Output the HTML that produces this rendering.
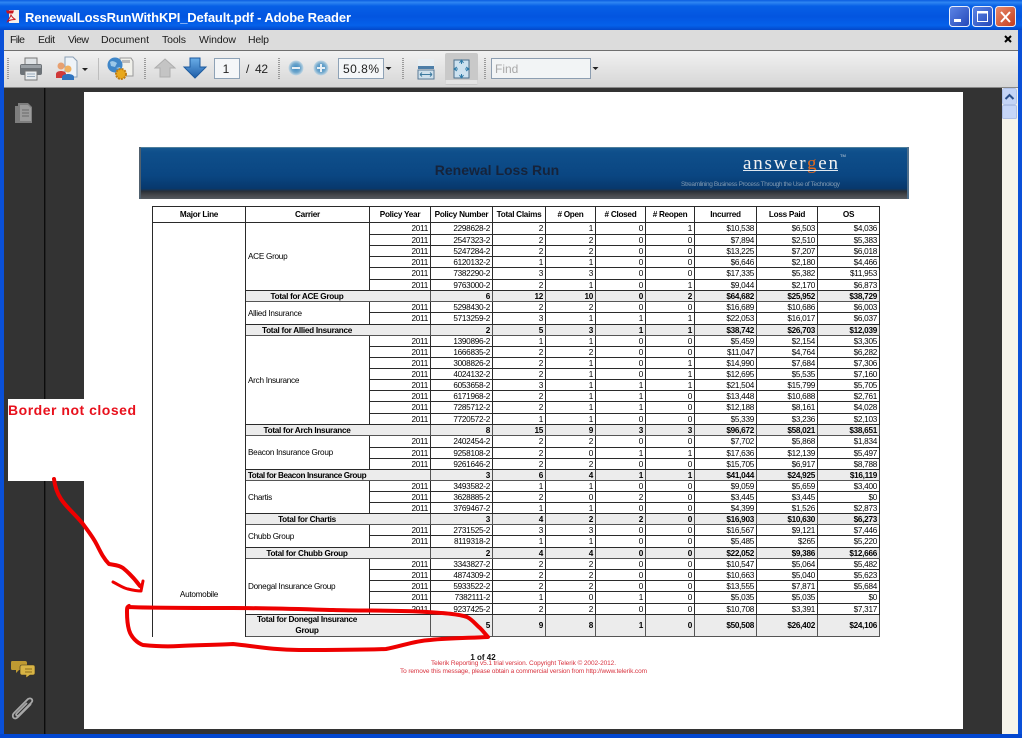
<!DOCTYPE html>
<html lang="en">
<head>
<meta charset="utf-8">
<title>RenewalLossRunWithKPI_Default.pdf - Adobe Reader</title>
<style>
html,body{margin:0;padding:0;background:#333;}
body{position:relative;width:1022px;height:738px;overflow:hidden;font-family:"Liberation Sans",sans-serif;}
#chrome{position:absolute;left:0;top:0;}
#rep{position:absolute;left:152px;top:206px;width:727px;table-layout:fixed;border-collapse:collapse;font:8.2px/9px "Liberation Sans",sans-serif;letter-spacing:-.28px;color:#000;background:#fff;}
#rep td,#rep th{border:1px solid #2a2a2a;padding:0 2px 0 2px;text-align:right;overflow:hidden;white-space:nowrap;}
#rep tr{height:11px;}
#rep tr.a{height:12px;}
#rep tr.h{height:16px;}
#rep tr.d{height:21px;}
#rep th{text-align:center;font-weight:bold;padding:0;}
#rep td.c{text-align:left;white-space:normal;}
#rep td.m{text-align:center;vertical-align:bottom;padding-bottom:38px;border-bottom:0;}
#rep tr.t td{background:#ececec;font-weight:bold;border-color:#555;}
#rep tr.t td.l{text-align:center;padding:0 62px 0 0;white-space:nowrap;}
#rep tr.d td.l{line-height:10.5px;}
#over{position:absolute;left:0;top:0;pointer-events:none;}
</style>
</head>
<body>
<svg id="chrome" width="1022" height="738" viewBox="0 0 1022 738" xmlns="http://www.w3.org/2000/svg">
<defs>
<linearGradient id="tb" x1="0" y1="0" x2="0" y2="1"><stop offset="0" stop-color="#0a5ce0"/><stop offset=".08" stop-color="#2f86f2"/><stop offset=".2" stop-color="#0760e6"/><stop offset=".55" stop-color="#0355e0"/><stop offset=".85" stop-color="#0561ea"/><stop offset="1" stop-color="#0347c8"/></linearGradient>
<linearGradient id="tool" x1="0" y1="0" x2="0" y2="1"><stop offset="0" stop-color="#f1f1f1"/><stop offset="1" stop-color="#d6d6d6"/></linearGradient>
<linearGradient id="ban" x1="0" y1="0" x2="0" y2="1"><stop offset="0" stop-color="#175a92"/><stop offset=".1" stop-color="#0f4f8b"/><stop offset=".55" stop-color="#0a4682"/><stop offset=".8" stop-color="#07386c"/><stop offset=".85" stop-color="#2a3038"/><stop offset=".92" stop-color="#44464a"/><stop offset="1" stop-color="#555a60"/></linearGradient>
<linearGradient id="btn" x1="0" y1="0" x2="1" y2="1"><stop offset="0" stop-color="#5d86e6"/><stop offset="1" stop-color="#2447b8"/></linearGradient>
<linearGradient id="cls" x1="0" y1="0" x2="1" y2="1"><stop offset="0" stop-color="#e98d6e"/><stop offset="1" stop-color="#c33a1a"/></linearGradient>
<linearGradient id="ab" x1="0" y1="0" x2="0" y2="1"><stop offset="0" stop-color="#6aaee8"/><stop offset="1" stop-color="#1f5ea8"/></linearGradient>
<radialGradient id="zb"><stop offset="0" stop-color="#3d8ac0"/><stop offset=".6" stop-color="#6ea6cc"/><stop offset="1" stop-color="#c4d8e4"/></radialGradient>
</defs>

<!-- base -->
<rect width="1022" height="738" fill="#0347d0"/>
<rect x="0" y="0" width="1022" height="30" fill="url(#tb)"/>
<rect x="0" y="30" width="4" height="708" fill="#0a50d8"/>
<rect x="1018" y="30" width="4" height="708" fill="#0a50d8"/>
<rect x="4" y="30" width="1014" height="20" fill="#dcdcdc"/>
<rect x="4" y="50" width="1014" height="1" fill="#6f6f6f"/>
<rect x="4" y="51" width="1014" height="36" fill="url(#tool)"/>
<rect x="4" y="87" width="1014" height="1" fill="#888"/>
<rect x="4" y="88" width="1014" height="646" fill="#333"/>
<rect x="44" y="88" width="1.4" height="646" fill="#0c0c0c"/>
<rect x="84" y="92" width="879" height="637" fill="#fff"/>
<rect x="0" y="734" width="1022" height="4" fill="#0347d0"/>

<!-- title -->
<rect x="9" y="10" width="10" height="13" fill="#f6f0ea"/>
<path d="M6 10.5h8l-1 3H7z" fill="#c8141c"/>
<path d="M11 15c-1 3-3 5-3.5 6.5 2-1.500 5-2 8-2-2-1-3.500-2.500-4.500-4.500z" fill="none" stroke="#c8141c" stroke-width="1"/>
<text x="25" y="22" font-family="'Liberation Sans',sans-serif" font-weight="bold" font-size="13" fill="#fff" textLength="326" lengthAdjust="spacing">RenewalLossRunWithKPI_Default.pdf - Adobe Reader</text>

<!-- window buttons -->
<g stroke="#e8eefc" stroke-width="1">
<rect x="949.500" y="6.500" width="20" height="20" rx="3" fill="url(#btn)"/>
<rect x="972.500" y="6.500" width="20" height="20" rx="3" fill="url(#btn)"/>
<rect x="995.500" y="6.500" width="20" height="20" rx="3" fill="url(#cls)"/>
</g>
<rect x="954" y="19" width="7" height="3" fill="#fff"/>
<rect x="977.500" y="11.500" width="10" height="10" fill="none" stroke="#fff" stroke-width="1"/>
<rect x="977" y="11" width="11" height="2.500" fill="#fff"/>
<path d="M1001 12l9 10M1010 12l-9 10" stroke="#fff" stroke-width="2"/>

<!-- menu -->
<g font-family="'Liberation Sans',sans-serif" font-size="10.500" fill="#1a1a1a">
<text x="10" y="43" textLength="15">File</text>
<text x="38" y="43" textLength="17">Edit</text>
<text x="68" y="43" textLength="21">View</text>
<text x="101" y="43" textLength="48">Document</text>
<text x="162" y="43" textLength="24">Tools</text>
<text x="199" y="43" textLength="37">Window</text>
<text x="248" y="43" textLength="21">Help</text>
</g>
<path d="M1005 36l6 6M1011 36l-6 6" stroke="#000" stroke-width="2"/>

<!-- grips -->
<g stroke="#9a9a9a" stroke-width="2" stroke-dasharray="1 1">
<path d="M8 58v22M145 58v22M279 58v22M403 58v22M485 58v22"/>
</g>
<rect x="98" y="58" width="1" height="22" fill="#bdbdbd"/>

<!-- printer -->
<rect x="25" y="58" width="12" height="7" fill="#dfe3e6" stroke="#777"/>
<rect x="20" y="64" width="22" height="11" rx="2" fill="#6d7378"/>
<rect x="21" y="65" width="20" height="3" fill="#9aa0a5"/>
<rect x="25" y="71" width="12" height="9" fill="#e8ecef" stroke="#777"/>
<path d="M27 74h8M27 76.500h8" stroke="#9ab" stroke-width="1"/>

<!-- collaborate -->
<path d="M65 57h8l4 4v16H65z" fill="#eef3f8" stroke="#8a9fb5"/>
<circle cx="61" cy="66" r="3.500" fill="#e8a070"/>
<path d="M56 78v-4c0-4 10-4 10 0v4z" fill="#d03a3a"/>
<circle cx="68" cy="69" r="3.500" fill="#f0b060"/>
<path d="M62 80v-3c0-4 12-4 12 0v3z" fill="#2f74c0"/>
<path d="M82 68h6l-3 3z" fill="#222"/>

<!-- globe/gear -->
<path d="M120 58h11l2 3v15h-13z" fill="#f0f0ea" stroke="#999"/>
<rect x="122" y="60" width="8" height="3" fill="#bbb"/>
<circle cx="115" cy="65" r="7.500" fill="#3f86c8"/>
<path d="M110 62c3-2 5 0 7 1l-2 4-4-1zM116 68l4-1 1 3z" fill="#9cc8e8"/>
<circle cx="121" cy="74" r="5" fill="#e8a81c" stroke="#c07c10" stroke-width="2" stroke-dasharray="2 1"/>

<!-- arrows -->
<path d="M165 59l10 9h-5v9h-10v-9h-5z" fill="#c4c4c4" stroke="#aeaeae"/>
<path d="M190 58h10v9h6l-11 11-11-11h6z" fill="url(#ab)" stroke="#1d5a9e"/>

<!-- page num -->
<rect x="214.500" y="58.500" width="25" height="20" fill="#f4f6f8" stroke="#8ea2b6"/>
<g font-family="'Liberation Sans',sans-serif" font-size="12" fill="#222">
<text x="226" y="73" text-anchor="middle">1</text>
<text x="246" y="73">/</text>
<text x="255" y="73" textLength="13">42</text>
</g>

<!-- zoom -->
<circle cx="296" cy="68" r="7.500" fill="url(#zb)"/><rect x="292" y="67" width="8" height="2" fill="#e6eef4"/>
<circle cx="321" cy="68" r="7.500" fill="url(#zb)"/><path d="M317 68h8M321 64v8" stroke="#e6eef4" stroke-width="2"/>
<rect x="338.500" y="58.500" width="45" height="20" fill="#f4f6f8" stroke="#8ea2b6"/>
<text x="343" y="73" font-family="'Liberation Sans',sans-serif" font-size="12" fill="#222" textLength="36">50.8%</text>
<path d="M385.500 67h6l-3 3z" fill="#222"/>

<!-- fit width -->
<rect x="418" y="59" width="16" height="9" fill="#e8eef2"/>
<rect x="418" y="66" width="16" height="3" fill="#4d7ea8"/>
<rect x="418" y="70" width="16" height="9" fill="#cfe0ec" stroke="#5a7a96"/>
<path d="M420 74.500h12M420 74.500l2-2M420 74.500l2 2M432 74.500l-2-2M432 74.500l-2 2" stroke="#3d7aa0" fill="none"/>

<!-- fit page selected -->
<rect x="445" y="53" width="33" height="32" rx="2" fill="#c9c9c9"/>
<rect x="445.500" y="80" width="32" height="4" fill="#e4e4e4"/>
<rect x="454" y="60" width="15" height="18" fill="#cde2f0" stroke="#4b6f8c"/>
<path d="M461.500 60v4M461.500 74v4M454 69h4M465 69h4M459.500 63l2-3 2 3M459.500 75l2 3 2-3M457 67l-3 2 3 2M466 67l3 2-3 2" stroke="#2e7aa8" fill="none"/>

<!-- find -->
<rect x="491.500" y="58.500" width="99" height="20" fill="#f2f4f5" stroke="#8c9db0"/>
<text x="495" y="73" font-family="'Liberation Sans',sans-serif" font-size="12" fill="#a8a8a8">Find</text>
<path d="M592.500 67h6l-3 3z" fill="#222"/>

<!-- scrollbar -->
<rect x="1002" y="88" width="16" height="646" fill="#f6f4ea"/>
<rect x="1002.500" y="88.500" width="14" height="16" rx="2" fill="#c4d4f6" stroke="#b0c2e8"/>
<path d="M1005.500 99l4-4 4 4" fill="none" stroke="#2b4f8a" stroke-width="2"/>
<rect x="1002.500" y="105.500" width="14" height="13" rx="1" fill="#c6d6f8" stroke="#aebfe6"/>

<!-- side icons -->
<path d="M18 103h10l4 4v16H15v-17h3z" fill="#7e7e7e"/>
<path d="M20 105h8l3 3v13H20z" fill="#9c9c9c"/>
<path d="M22 110h7M22 113h7M22 116h7" stroke="#6a6a6a"/>
<path d="M12 661h13q2 0 2 2v5q0 2-2 2h-6l-3 3v-3h-4q-1 0-1-2v-5q0-2 1-2z" fill="#bf9a32"/>
<path d="M22 665h11q2 0 2 2v6q0 2-2 2h-3l-4 3v-3h-4q-2 0-2-2v-6q0-2 2-2z" fill="#d8b445" stroke="#3a3220" stroke-width=".6"/>
<path d="M25 669h7M25 672h7" stroke="#8a6d1c"/>
<path d="M31 704l-13 13c-4 4-7-1-4-4l14-14c3-2 6 1 3 4l-12 12c-2 2-4 0-2-2l10-10" fill="none" stroke="#a8a8a8" stroke-width="1.800"/>

<!-- report banner -->
<rect x="139" y="147" width="770" height="52" fill="url(#ban)"/>
<rect x="139" y="147" width="770" height="1" fill="#4f7f9c"/>
<rect x="139" y="147" width="2" height="52" fill="#50606e"/>
<rect x="907" y="147" width="2" height="52" fill="#50708c"/>
<text x="497" y="175" text-anchor="middle" font-family="'Liberation Sans',sans-serif" font-weight="bold" font-size="14" fill="#16233a">Renewal Loss Run</text>
<text x="743" y="169" font-family="'Liberation Serif',serif" font-size="19" fill="#f2f2f2" textLength="95" lengthAdjust="spacing">answer<tspan fill="#e06a20">g</tspan>en</text>
<rect x="743" y="170" width="95" height="1" fill="#dfe8f0"/>
<text x="840" y="157" font-family="'Liberation Sans',sans-serif" font-size="4" fill="#cfd8e0">TM</text>
<text x="681" y="186" font-family="'Liberation Sans',sans-serif" font-size="6.500" fill="#7f98b0" textLength="159">Streamlining Business Process Through the Use of Technology</text>

<!-- report footer -->
<text x="483" y="660" text-anchor="middle" font-family="'Liberation Sans',sans-serif" font-weight="bold" font-size="8" fill="#111">1 of 42</text>
<text x="431" y="665" font-family="'Liberation Sans',sans-serif" font-size="6.500" fill="#d8333f" textLength="185">Telerik Reporting v5.1 trial version. Copyright Telerik © 2002-2012.</text>
<text x="400" y="673" font-family="'Liberation Sans',sans-serif" font-size="6.500" fill="#d8333f" textLength="247">To remove this message, please obtain a commercial version from http://www.telerik.com</text>
</svg>

<table id="rep">
<colgroup><col style="width:93px"><col style="width:124px"><col style="width:61px"><col style="width:62px"><col style="width:53px"><col style="width:50px"><col style="width:50px"><col style="width:49px"><col style="width:62px"><col style="width:61px"><col style="width:62px"></colgroup>
<tr class="h"><th>Major Line</th><th>Carrier</th><th>Policy Year</th><th>Policy Number</th><th>Total Claims</th><th># Open</th><th># Closed</th><th># Reopen</th><th>Incurred</th><th>Loss Paid</th><th>OS</th></tr>
<tr class="a"><td class="m" rowspan="36">Automobile</td><td class="c" rowspan="6">ACE Group</td><td>2011</td><td>2298628-2</td><td>2</td><td>1</td><td>0</td><td>1</td><td>$10,538</td><td>$6,503</td><td>$4,036</td></tr>
<tr><td>2011</td><td>2547323-2</td><td>2</td><td>2</td><td>0</td><td>0</td><td>$7,894</td><td>$2,510</td><td>$5,383</td></tr>
<tr><td>2011</td><td>5247284-2</td><td>2</td><td>2</td><td>0</td><td>0</td><td>$13,225</td><td>$7,207</td><td>$6,018</td></tr>
<tr><td>2011</td><td>6120132-2</td><td>1</td><td>1</td><td>0</td><td>0</td><td>$6,646</td><td>$2,180</td><td>$4,466</td></tr>
<tr class="a"><td>2011</td><td>7382290-2</td><td>3</td><td>3</td><td>0</td><td>0</td><td>$17,335</td><td>$5,382</td><td>$11,953</td></tr>
<tr><td>2011</td><td>9763000-2</td><td>2</td><td>1</td><td>0</td><td>1</td><td>$9,044</td><td>$2,170</td><td>$6,873</td></tr>
<tr class="t"><td class="l" colspan="2">Total for ACE Group</td><td>6</td><td>12</td><td>10</td><td>0</td><td>2</td><td>$64,682</td><td>$25,952</td><td>$38,729</td></tr>
<tr><td class="c" rowspan="2">Allied Insurance</td><td>2011</td><td>5298430-2</td><td>2</td><td>2</td><td>0</td><td>0</td><td>$16,689</td><td>$10,686</td><td>$6,003</td></tr>
<tr class="a"><td>2011</td><td>5713259-2</td><td>3</td><td>1</td><td>1</td><td>1</td><td>$22,053</td><td>$16,017</td><td>$6,037</td></tr>
<tr class="t"><td class="l" colspan="2">Total for Allied Insurance</td><td>2</td><td>5</td><td>3</td><td>1</td><td>1</td><td>$38,742</td><td>$26,703</td><td>$12,039</td></tr>
<tr><td class="c" rowspan="8">Arch Insurance</td><td>2011</td><td>1390896-2</td><td>1</td><td>1</td><td>0</td><td>0</td><td>$5,459</td><td>$2,154</td><td>$3,305</td></tr>
<tr><td>2011</td><td>1666835-2</td><td>2</td><td>2</td><td>0</td><td>0</td><td>$11,047</td><td>$4,764</td><td>$6,282</td></tr>
<tr><td>2011</td><td>3008826-2</td><td>2</td><td>1</td><td>0</td><td>1</td><td>$14,990</td><td>$7,684</td><td>$7,306</td></tr>
<tr><td>2011</td><td>4024132-2</td><td>2</td><td>1</td><td>0</td><td>1</td><td>$12,695</td><td>$5,535</td><td>$7,160</td></tr>
<tr><td>2011</td><td>6053658-2</td><td>3</td><td>1</td><td>1</td><td>1</td><td>$21,504</td><td>$15,799</td><td>$5,705</td></tr>
<tr><td>2011</td><td>6171968-2</td><td>2</td><td>1</td><td>1</td><td>0</td><td>$13,448</td><td>$10,688</td><td>$2,761</td></tr>
<tr class="a"><td>2011</td><td>7285712-2</td><td>2</td><td>1</td><td>1</td><td>0</td><td>$12,188</td><td>$8,161</td><td>$4,028</td></tr>
<tr><td>2011</td><td>7720572-2</td><td>1</td><td>1</td><td>0</td><td>0</td><td>$5,339</td><td>$3,236</td><td>$2,103</td></tr>
<tr class="t"><td class="l" colspan="2">Total for Arch Insurance</td><td>8</td><td>15</td><td>9</td><td>3</td><td>3</td><td>$96,672</td><td>$58,021</td><td>$38,651</td></tr>
<tr class="a"><td class="c" rowspan="3">Beacon Insurance Group</td><td>2011</td><td>2402454-2</td><td>2</td><td>2</td><td>0</td><td>0</td><td>$7,702</td><td>$5,868</td><td>$1,834</td></tr>
<tr><td>2011</td><td>9258108-2</td><td>2</td><td>0</td><td>1</td><td>1</td><td>$17,636</td><td>$12,139</td><td>$5,497</td></tr>
<tr><td>2011</td><td>9261646-2</td><td>2</td><td>2</td><td>0</td><td>0</td><td>$15,705</td><td>$6,917</td><td>$8,788</td></tr>
<tr class="t"><td class="l" colspan="2" style="letter-spacing:-.42px">Total for Beacon Insurance Group</td><td>3</td><td>6</td><td>4</td><td>1</td><td>1</td><td>$41,044</td><td>$24,925</td><td>$16,119</td></tr>
<tr><td class="c" rowspan="3">Chartis</td><td>2011</td><td>3493582-2</td><td>1</td><td>1</td><td>0</td><td>0</td><td>$9,059</td><td>$5,659</td><td>$3,400</td></tr>
<tr><td>2011</td><td>3628885-2</td><td>2</td><td>0</td><td>2</td><td>0</td><td>$3,445</td><td>$3,445</td><td>$0</td></tr>
<tr><td>2011</td><td>3769467-2</td><td>1</td><td>1</td><td>0</td><td>0</td><td>$4,399</td><td>$1,526</td><td>$2,873</td></tr>
<tr class="t"><td class="l" colspan="2">Total for Chartis</td><td>3</td><td>4</td><td>2</td><td>2</td><td>0</td><td>$16,903</td><td>$10,630</td><td>$6,273</td></tr>
<tr><td class="c" rowspan="2">Chubb Group</td><td>2011</td><td>2731525-2</td><td>3</td><td>3</td><td>0</td><td>0</td><td>$16,567</td><td>$9,121</td><td>$7,446</td></tr>
<tr class="a"><td>2011</td><td>8119318-2</td><td>1</td><td>1</td><td>0</td><td>0</td><td>$5,485</td><td>$265</td><td>$5,220</td></tr>
<tr class="t"><td class="l" colspan="2">Total for Chubb Group</td><td>2</td><td>4</td><td>4</td><td>0</td><td>0</td><td>$22,052</td><td>$9,386</td><td>$12,666</td></tr>
<tr><td class="c" rowspan="5">Donegal Insurance Group</td><td>2011</td><td>3343827-2</td><td>2</td><td>2</td><td>0</td><td>0</td><td>$10,547</td><td>$5,064</td><td>$5,482</td></tr>
<tr><td>2011</td><td>4874309-2</td><td>2</td><td>2</td><td>0</td><td>0</td><td>$10,663</td><td>$5,040</td><td>$5,623</td></tr>
<tr><td>2011</td><td>5933522-2</td><td>2</td><td>2</td><td>0</td><td>0</td><td>$13,555</td><td>$7,871</td><td>$5,684</td></tr>
<tr class="a"><td>2011</td><td>7382111-2</td><td>1</td><td>0</td><td>1</td><td>0</td><td>$5,035</td><td>$5,035</td><td>$0</td></tr>
<tr><td>2011</td><td>9237425-2</td><td>2</td><td>2</td><td>0</td><td>0</td><td>$10,708</td><td>$3,391</td><td>$7,317</td></tr>
<tr class="t d"><td class="l" colspan="2">Total for Donegal Insurance<br>Group</td><td>5</td><td>9</td><td>8</td><td>1</td><td>0</td><td>$50,508</td><td>$26,402</td><td>$24,106</td></tr>
</table>

<svg id="over" width="1022" height="738" viewBox="0 0 1022 738" xmlns="http://www.w3.org/2000/svg">
<rect x="8" y="399" width="76" height="82" fill="#fff"/>
<text x="8" y="415" font-family="'Liberation Sans',sans-serif" font-weight="bold" font-size="14" fill="#e8101c" textLength="128" lengthAdjust="spacing">Border not closed</text>
<g fill="none" stroke="#ee0000" stroke-linecap="round" stroke-linejoin="round">
<path d="M54 479c1 8 3 14 7 20 6 9 13 14 22 25 5 7 10 13 14 21 4 8 7 14 12 19 5 1 10 1 14 4 6 5 11 10 17 18" stroke-width="4"/>
<path d="M113 582c6 3 10 6 15 7 4 1 9 2 13 2M141 591l1-5 1-5" stroke-width="3"/>
<path d="M129 607c20 1 60 1 104 1 30 0 62 1 100 2 32 1 62 0 94 2 16 1 32 2 40 5 6 3 9 8 13 11 4 4 6 7 8 9-18 1-38 1-58 3-16 1-28 6-44 9-28 1-60 1-87 1-26 0-46-4-66-6-16 1-36 1-54 2-14 1-26 0-36-1-6-2-12-8-14-15-2-7-2-14-2-18s0-5 2-6" stroke-width="4"/>
</g>
</svg>
</body>
</html>
